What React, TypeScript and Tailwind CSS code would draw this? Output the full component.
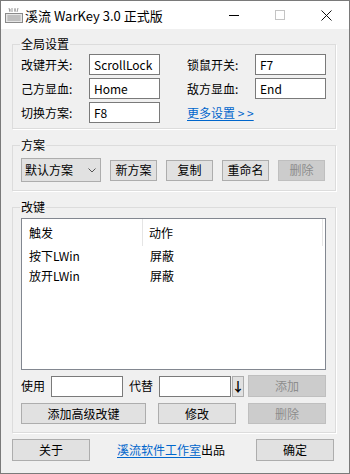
import React from "react";

const btn =
  "h-full flex items-center justify-center bg-[#e1e1e1] border border-[#adadad] text-black";
const btnOff =
  "h-full flex items-center justify-center bg-[#cccccc] border border-[#bfbfbf] text-[#8d8d8d]";
const input =
  "h-[21px] bg-white border border-[#7a7a7a] pl-[4px] flex items-center text-black";
const groupBox =
  "w-[324px] border border-[#dcdcdc] shadow-[1px_1px_0_#fff] pl-[8px] pr-[9px]";
const legend = "text-[12px] leading-[16px] px-[1px] -ml-[1px]";

const KeyboardIcon = () => (
  <svg width="20" height="16" viewBox="0 0 20 16">
    <path d="M5 1 L6 5 M8 1 L8 5 M11 1 L11 5 M14 1 L13 5" stroke="#9a9a9a" strokeWidth="1" />
    <path d="M5 3 L7 3 M10 3 L12 3" stroke="#9a9a9a" strokeWidth="1" />
    <rect x="1.5" y="6.5" width="17" height="9" fill="#e6e6e6" stroke="#8a8a8a" />
    <path
      d="M3 9 H17 M3 11 H17 M3 13 H17 M5 8 V14 M7 8 V14 M9 8 V14 M11 8 V14 M13 8 V14 M15 8 V14"
      stroke="#a9a9a9"
      strokeWidth="0.8"
    />
  </svg>
);

const Chevron = () => (
  <svg width="8" height="5" viewBox="0 0 8 5">
    <path d="M0.5 0.5 L4 4 L7.5 0.5" fill="none" stroke="#555" strokeWidth="1" />
  </svg>
);

export default function App() {
  return (
    <div className="w-[350px] h-[474px] border border-[#7a7a7a] bg-[#f0f0f0] flex flex-col text-[12px] leading-[16px] text-black font-['Noto_Sans_CJK_SC','Microsoft_YaHei',sans-serif] overflow-hidden">
      {/* title bar */}
      <div className="h-[28px] bg-white flex items-center">
        <div className="pl-[3px] pr-[1px] flex items-center">
          <KeyboardIcon />
        </div>
        <span className="text-[13px] pt-[1px]">溪流 WarKey 3.0 正式版</span>
        <div className="ml-auto flex h-full">
          <div className="w-[46px] h-full flex items-center justify-center">
            <div className="w-[10px] h-[1px] bg-black" />
          </div>
          <div className="w-[46px] h-full flex items-center justify-center">
            <div className="w-[10px] h-[10px] border border-[#c4c4c4]" />
          </div>
          <div className="w-[46px] h-full flex items-center justify-center">
            <svg width="11" height="11" viewBox="0 0 11 11">
              <path d="M0.5 0.5 L10.5 10.5 M10.5 0.5 L0.5 10.5" stroke="#111" strokeWidth="1" />
            </svg>
          </div>
        </div>
      </div>

      {/* body */}
      <div className="flex flex-col pt-[7px] pl-[11px]">
        <fieldset className={`${groupBox} pt-[2px] pb-[5px]`}>
          <legend className={legend}>全局设置</legend>
          <div className="grid grid-cols-[68px_71px_27px_68px_71px] gap-y-[3px] items-center">
            <span>改键开关:</span>
            <div className={input}>ScrollLock</div>
            <span />
            <span>锁鼠开关:</span>
            <div className={input}>F7</div>

            <span>己方显血:</span>
            <div className={input}>Home</div>
            <span />
            <span>敌方显血:</span>
            <div className={input}>End</div>

            <span>切换方案:</span>
            <div className={input}>F8</div>
            <span />
            <span className="col-span-2 text-[#0066cc] underline underline-offset-2">更多设置 &gt; &gt;</span>
          </div>
        </fieldset>

        <fieldset className={`${groupBox} mt-[8px] pt-[5px] pb-[8px]`}>
          <legend className={legend}>方案</legend>
          <div className="h-[24px] flex items-center gap-[9px]">
            <div className="w-[80px] h-[24px] bg-[#e1e1e1] border border-[#adadad] flex items-center pl-[3px] pr-[4px]">
              <span>默认方案</span>
              <span className="ml-auto flex">
                <Chevron />
              </span>
            </div>
            <div className="w-[47px] h-[21px]">
              <div className={btn}>新方案</div>
            </div>
            <div className="w-[47px] h-[21px]">
              <div className={btn}>复制</div>
            </div>
            <div className="w-[47px] h-[21px]">
              <div className={btn}>重命名</div>
            </div>
            <div className="w-[47px] h-[21px]">
              <div className={btnOff}>删除</div>
            </div>
          </div>
        </fieldset>

        <fieldset className={`${groupBox} mt-[8px] pt-[3px] pb-[8px]`}>
          <legend className={legend}>改键</legend>
          <div className="h-[152px] bg-white border border-[#828790] flex flex-col">
            <div className="h-[27px] flex items-center">
              <div className="w-[121px] h-full flex items-center pl-[7px] border-r border-[#e5e5e5]">触发</div>
              <div className="w-[180px] h-full flex items-center pl-[6px] border-r border-[#e5e5e5]">动作</div>
            </div>
            <div className="h-[20px] flex items-center">
              <div className="w-[121px] pl-[7px]">按下LWin</div>
              <div className="pl-[7px]">屏蔽</div>
            </div>
            <div className="h-[20px] flex items-center">
              <div className="w-[121px] pl-[7px]">放开LWin</div>
              <div className="pl-[7px]">屏蔽</div>
            </div>
          </div>

          <div className="mt-[5px] h-[22px] flex items-center">
            <span className="w-[30px]">使用</span>
            <div className={`${input} w-[72px]`} />
            <span className="w-[30px] ml-[6px]">代替</span>
            <div className={`${input} w-[72px]`} />
            <div className="ml-[1px] w-[12px] h-[21px] bg-[#e1e1e1] border border-[#adadad] flex items-center justify-center font-bold text-[13px]">
              ↓
            </div>
            <div className="ml-[4px] w-[78px] h-[22px]">
              <div className={btnOff}>添加</div>
            </div>
          </div>

          <div className="mt-[6px] h-[21px] flex items-center gap-[12px]">
            <div className="w-[125px] h-[21px]">
              <div className={btn}>添加高级改键</div>
            </div>
            <div className="w-[78px] h-[21px]">
              <div className={btn}>修改</div>
            </div>
            <div className="w-[78px] h-[21px]">
              <div className={btnOff}>删除</div>
            </div>
          </div>
        </fieldset>

        <div className="mt-[6px] w-[322px] h-[22px] flex items-center">
          <div className="w-[78px] h-[22px]">
            <div className={btn}>关于</div>
          </div>
          <span className="ml-[27px]">
            <span className="text-[#0066cc] underline underline-offset-2">溪流软件工作室</span>出品
          </span>
          <div className="ml-auto w-[78px] h-[22px]">
            <div className={btn}>确定</div>
          </div>
        </div>
      </div>
    </div>
  );
}
